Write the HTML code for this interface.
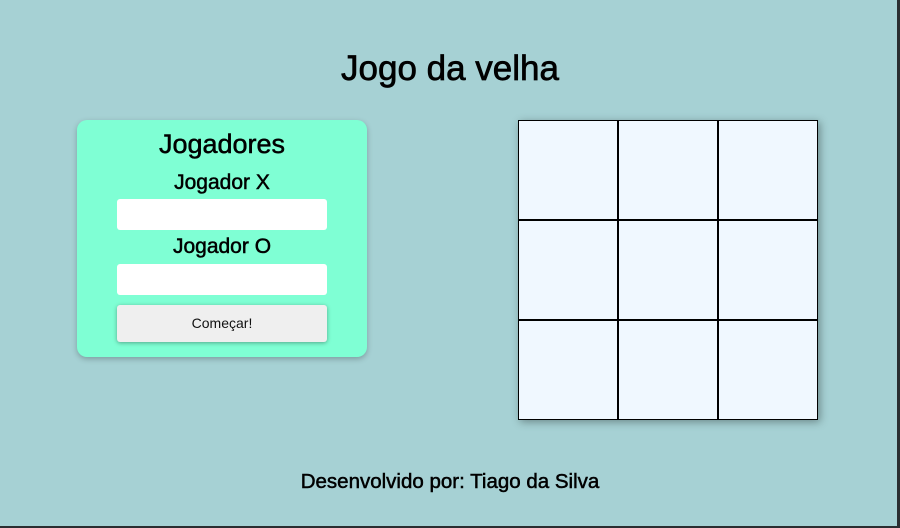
<!DOCTYPE html>
<html><head><meta charset="utf-8"><style>
*{box-sizing:border-box;margin:0;padding:0}
body{width:900px;height:528px;background:#a6d1d4;font-family:"Liberation Sans",sans-serif;position:relative;overflow:hidden}
.rb{position:absolute;right:0;top:0;width:3px;height:528px;background:#2a2e31}
.bb{position:absolute;left:0;bottom:0;width:900px;height:2px;background:#2a2e31}
h1{position:absolute;top:49px;left:0;width:900px;text-align:center;font-size:35px;font-weight:normal;color:#000;-webkit-text-stroke:0.7px #000}
.card{position:absolute;left:77px;top:120px;width:290px;height:237px;background:#7fffd4;border-radius:10px;box-shadow:0 2px 6px rgba(0,0,0,.25)}
.t{position:absolute;left:0;width:290px;text-align:center;color:#000;-webkit-text-stroke:0.5px #000}
.in{position:absolute;left:40px;width:210px;height:31px;background:#fff;border-radius:3px}
.btn{position:absolute;left:40px;top:185px;width:210px;height:37px;background:#efefef;border-radius:3px;box-shadow:0 1px 4px rgba(0,0,0,.35);text-align:center;line-height:37px;font-size:14px;color:#111}
.board{position:absolute;left:518px;top:120px;width:300px;height:300px;box-shadow:2px 2px 8px rgba(0,0,0,.35)}
.c{position:absolute;width:100px;height:100px;background:#f0f8ff;border:1px solid #000}
.f{position:absolute;top:470px;left:0;width:900px;text-align:center;font-size:20.5px;color:#000;-webkit-text-stroke:0.5px #000}
</style></head><body>
<h1>Jogo da velha</h1>
<div class="card">
<div class="t" style="top:9px;font-size:27px">Jogadores</div>
<div class="t" style="top:51px;font-size:21px">Jogador X</div>
<div class="in" style="top:79px"></div>
<div class="t" style="top:115px;font-size:21px">Jogador O</div>
<div class="in" style="top:144px"></div>
<div class="btn">Começar!</div>
</div>
<div class="board">
<div class="c" style="left:0;top:0"></div><div class="c" style="left:100px;top:0"></div><div class="c" style="left:200px;top:0"></div>
<div class="c" style="left:0;top:100px"></div><div class="c" style="left:100px;top:100px"></div><div class="c" style="left:200px;top:100px"></div>
<div class="c" style="left:0;top:200px"></div><div class="c" style="left:100px;top:200px"></div><div class="c" style="left:200px;top:200px"></div>
</div>
<div class="f">Desenvolvido por: Tiago da Silva</div>
<div class="rb"></div><div class="bb"></div>
</body></html>
